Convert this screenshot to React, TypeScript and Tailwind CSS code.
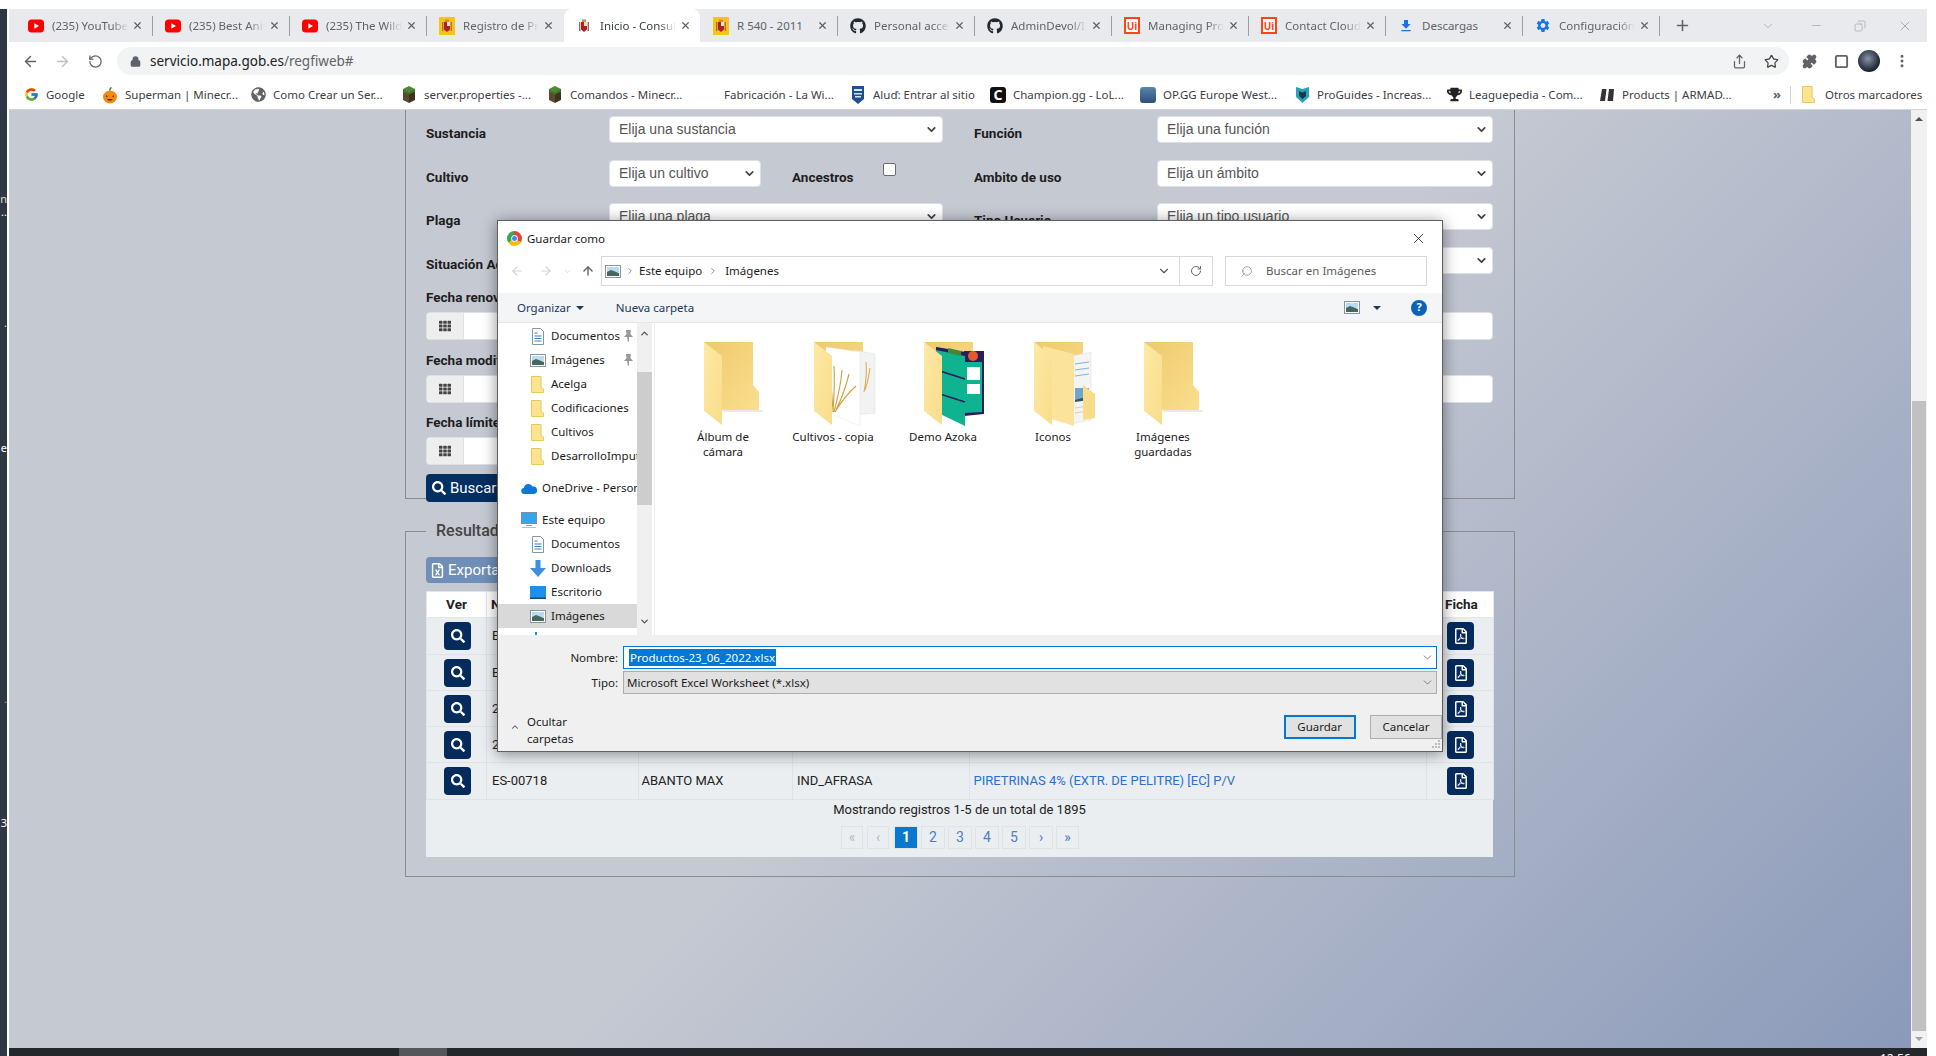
import React from "react";
import { ArrowLeft, ArrowRight, ArrowUp, RotateCw, Lock, Share, Star, Puzzle, EllipsisVertical, X, Plus, Minus, ChevronDown, ChevronUp, ChevronRight, Search, Square, Copy } from "lucide-react";
import { FaSearch, FaRegFilePdf, FaRegFileExcel, FaTh, FaGithub, FaTrophy, FaGlobeAmericas } from "react-icons/fa";
import { FcGoogle } from "react-icons/fc";
import { MdSettings, MdFileDownload } from "react-icons/md";

const ui = "font-['Noto_Sans','Open_Sans',sans-serif]";
const web = "font-['Roboto',sans-serif]";

function YT() {
  return <svg width="16" height="16" viewBox="0 0 16 16"><rect y="1.5" width="16" height="13" rx="3.5" fill="#f00" /><path d="M6.3 5.2v5.6L11 8z" fill="#fff" /></svg>;
}
function Arms({ bg }: { bg?: boolean }) {
  return (
    <svg width="16" height="18" viewBox="0 0 16 18">
      {bg && <rect width="16" height="18" fill="#f6c21c" />}
      <path d="M5 5h6v7.5L8 15l-3-2.5z" fill="#b5201f" />
      <path d="M3 5h1.4v9H3zM11.6 5H13v9h-1.4z" fill={bg ? "#a9772c" : "#8a6d6d"} />
      <path d="M6 2.5h4V5H6z" fill="#c8922e" />
      <path d="M8 5h3v4H8z" fill="#e6e0d0" />
    </svg>
  );
}
function UiP() {
  return <span className={`flex h-[17px] w-[16px] items-center justify-center border-2 border-[#fa4616] bg-white text-[10px] font-bold leading-none text-[#fa4616] ${ui}`}>Ui</span>;
}

const tabs = [
  { t: "(235) YouTube", i: <YT /> },
  { t: "(235) Best Anime", i: <YT /> },
  { t: "(235) The Wild", i: <YT /> },
  { t: "Registro de Productos", i: <Arms bg /> },
  { t: "Inicio - Consulta", i: <Arms />, a: true },
  { t: "R 540 - 2011", i: <Arms bg />, nf: true },
  { t: "Personal access", i: <FaGithub size={16} color="#24292f" /> },
  { t: "AdminDevol/I", i: <FaGithub size={16} color="#24292f" /> },
  { t: "Managing Projects", i: <UiP /> },
  { t: "Contact Cloud", i: <UiP /> },
  { t: "Descargas", i: <MdFileDownload size={18} color="#1a73e8" />, nf: true },
  { t: "Configuración", i: <MdSettings size={17} color="#1a73e8" /> },
];

function Tab({ t, i, a, nf }: { t: string; i: React.ReactNode; a?: boolean; nf?: boolean }) {
  return (
    <div className={`flex h-[33px] w-[136px] shrink-0 items-center pl-[12px] ${a ? "rounded-t-lg bg-white" : ""}`}>
      <span className="flex w-[16px] shrink-0 justify-center">{i}</span>
      <span className={`ml-[8px] w-[76px] overflow-hidden whitespace-nowrap text-[11.5px] ${a ? "text-[#3c4043]" : "text-[#5f6368]"} ${nf ? "" : "[mask-image:linear-gradient(90deg,#000_78%,transparent_100%)]"}`}>{t}</span>
      <X size={11} strokeWidth={2.6} className="ml-[4px] shrink-0 text-[#5f6368]" />
    </div>
  );
}

function Block() {
  return <svg width="14" height="17" viewBox="0 0 14 17"><path d="M1 3l6-3 6 3-6 3z" fill="#4e8a32" /><path d="M1 3l6 3v11l-6-3z" fill="#5b4a2d" /><path d="M13 3L7 6v11l6-3z" fill="#3f3320" /><path d="M1 3l6 3 6-3v2.5l-6 3-6-3z" fill="#3c7a28" /></svg>;
}

const bookmarks = [
  { t: "Google", w: "w-[79px]", i: <FcGoogle size={15} /> },
  { t: "Superman | Minecr...", w: "w-[148px]", i: <svg width="16" height="18" viewBox="0 0 16 18"><ellipse cx="8" cy="11" rx="7" ry="6.5" fill="#f08a12" /><path d="M7 4.5c0-2 1-3 2-3.5l1 1c-1 .5-1.4 1.200-1.400 2.500z" fill="#4c7a2a" /><path d="M4 9l2 1.500-2 .5zM12 9l-2 1.500 2 .5zM5 13h6l-1.500 1.500h-3z" fill="#5a2b00" /></svg> },
  { t: "Como Crear un Ser...", w: "w-[151px]", i: <FaGlobeAmericas size={15} color="#5f6368" /> },
  { t: "server.properties -...", w: "w-[146px]", i: <Block /> },
  { t: "Comandos - Minecr...", w: "w-[154px]", i: <Block /> },
  { t: "Fabricación - La Wi...", w: "w-[149px]", i: <span className="block h-[16px] w-[16px]" /> },
  { t: "Aluď: Entrar al sitio", w: "w-[140px]", i: <svg width="14" height="18" viewBox="0 0 14 18"><path d="M1 0h12v13l-6 5-6-5z" fill="#1d4f91" /><path d="M3 3h8v2H3zM3 7h8v1.500H3zM4 10h6v1.500H4z" fill="#d9e6f5" /></svg> },
  { t: "Champion.gg - LoL...", w: "w-[150px]", i: <span className="flex h-[16px] w-[16px] items-center justify-center rounded-[3px] bg-[#111] text-[14px] font-bold leading-none text-white">C</span> },
  { t: "OP.GG Europe West...", w: "w-[154px]", i: <span className="block h-[16px] w-[16px] rounded-[3px] bg-[linear-gradient(180deg,#5c84ad,#2c4f79)]" /> },
  { t: "ProGuides - Increas...", w: "w-[152px]", i: <svg width="15" height="17" viewBox="0 0 15 17"><path d="M1 1l6.500 2L14 1v10l-6.500 6L1 11z" fill="#2aa3b8" /><path d="M4 5l3.500 1.500L11 5v5l-3.500 3L4 10z" fill="#14394a" /></svg> },
  { t: "Leaguepedia - Com...", w: "w-[153px]", i: <FaTrophy size={15} color="#222" /> },
  { t: "Products | ARMAD...", w: "w-[174px]", i: <svg width="16" height="16" viewBox="0 0 16 16"><path d="M3 2h4.500L6 14H1zM10 2h5l-1 12H8.500z" fill="#333" /></svg> },
];

function Bookmark({ t, w, i }: { t: string; w: string; i: React.ReactNode }) {
  return (
    <div className={`flex items-center ${w}`}>
      <span className="flex w-[16px] shrink-0 justify-center">{i}</span>
      <span className="ml-[7px] whitespace-nowrap text-[11.5px] text-[#3c4043]">{t}</span>
    </div>
  );
}

function Sel({ t, w }: { t: string; w: string }) {
  return (
    <div className={`flex h-[27px] shrink-0 items-center justify-between rounded-[4px] border border-[#dde1e7] bg-white pl-[9px] pr-[4px] font-['Liberation_Sans',sans-serif] text-[14px] text-[#555] ${w}`}>
      <span>{t}</span>
      <ChevronDown size={13} strokeWidth={3.2} className="text-[#444]" />
    </div>
  );
}

function Lbl({ t, w }: { t: string; w: string }) {
  return <div className={`mt-[4px] shrink-0 whitespace-nowrap text-[13.5px] font-bold leading-[27px] text-[#1d1d1d] ${w}`}>{t}</div>;
}

function DateInput({ w }: { w: string }) {
  return (
    <div className={`flex h-[28px] overflow-hidden rounded-[4px] border border-[#dde1e7] bg-white ${w}`}>
      <div className="flex w-[37px] items-center justify-center border-r border-[#dde1e7] bg-[#eeeeee]">
        <FaTh size={12} color="#444" />
      </div>
    </div>
  );
}

function DateRow({ t, right }: { t: string; right?: boolean }) {
  return (
    <div className="mt-[9.500px] flex">
      <div className="w-[517px]">
        <div className="h-[20px] whitespace-nowrap text-[13.5px] font-bold leading-[20px] text-[#1d1d1d]">{t}</div>
        <DateInput w="mt-[5px] w-[517px]" />
      </div>
      {right && (
        <div className="ml-[31px] w-[519px] pt-[25px]">
          <div className="h-[28px] rounded-[4px] border border-[#dde1e7] bg-white" />
        </div>
      )}
    </div>
  );
}

function IconBtn({ children }: { children: React.ReactNode }) {
  return <span className="flex h-[28px] w-[27px] items-center justify-center rounded-[4px] bg-[#042b5c] text-white">{children}</span>;
}

const rows = [
  { h: "h-[37px]", a: "E" },
  { h: "h-[36px]", a: "E" },
  { h: "h-[36px]", a: "2" },
  { h: "h-[36px]", a: "2" },
  { h: "h-[37px]", a: "ES-00718", b: "ABANTO MAX", c: "IND_AFRASA", d: "PIRETRINAS 4% (EXTR. DE PELITRE) [EC] P/V" },
];

function Pg({ t, cls }: { t: string; cls: string }) {
  return <span className={`flex h-[23px] items-center justify-center border border-[#dfe3e8] text-[14px] ${cls}`}>{t}</span>;
}

function NavFolder() {
  return <svg width="13" height="17" viewBox="0 0 13 17"><path d="M.5.500h9.500v11l2.500 1.500v3.500H.5z" fill="#fde590" stroke="#e8c660" /></svg>;
}
function NavDoc() {
  return <svg width="12" height="17" viewBox="0 0 12 17"><path d="M.5.500h8l3 3v13H.5z" fill="#fff" stroke="#8a94a0" /><path d="M2.500 5h3M2.500 8h7M2.500 10.500h7M2.500 13h7" stroke="#3f7fc4" /></svg>;
}
function NavPic() {
  return <svg width="16" height="13" viewBox="0 0 16 13"><rect x=".5" y=".5" width="15" height="12" fill="#fff" stroke="#8a94a0" /><rect x="2" y="2" width="12" height="5" fill="#b9dcf2" /><path d="M2 7l4-2 8 3v3H2z" fill="#47685f" /></svg>;
}
function NavCloud() {
  return <svg width="16" height="11" viewBox="0 0 16 11"><path d="M3.500 11a3 3 0 0 1-.5-6 4.500 4.500 0 0 1 8.500-1.500A3.800 3.800 0 0 1 13 11z" fill="#0f78d4" /></svg>;
}
function NavPC() {
  return <svg width="16" height="16" viewBox="0 0 16 16"><rect x=".5" y=".5" width="15" height="11" fill="#35a6ec" stroke="#7f8e9c" /><path d="M5 13h6v1H5z" fill="#8d99a5" /><path d="M1 15h14v1H1z" fill="#b7c0c9" /></svg>;
}
function NavDown() {
  return <svg width="16" height="17" viewBox="0 0 16 17"><path d="M5.500 0h5v8H16l-8 9-8-9h5.500z" fill="#3f8fe0" /></svg>;
}
function NavDesk() {
  return <svg width="16" height="13" viewBox="0 0 16 13"><rect width="16" height="13" fill="#1f8fe8" /><path d="M0 11.500h16V13H0z" fill="#0b4c8a" /></svg>;
}

function NavRow({ t, icon, l1, pin, sel, gap }: { t: string; icon: React.ReactNode; l1?: boolean; pin?: boolean; sel?: boolean; gap?: boolean }) {
  return (
    <div className={`relative flex h-[24px] shrink-0 items-center whitespace-nowrap text-[11.5px] text-[#1b1b1b] ${sel ? "bg-[#d9d9d9]" : ""} ${gap ? "mt-[8px]" : ""}`}>
      <span className={`flex shrink-0 justify-center ${l1 ? "ml-[23px] w-[16px]" : "ml-[31px] w-[17px]"}`}>{icon}</span>
      <span className={l1 ? "ml-[5px]" : "ml-[5px]"}>{t}</span>
      {pin && <span className="absolute right-[3px] top-[5px] bg-white pl-[2px] text-[#9a9a9a]"><svg width="11" height="13" viewBox="0 0 11 13"><path d="M3 1h5l-.6 4L10 8H6v4l-1 1-1-5H1l2.500-3z" fill="currentColor" /></svg></span>}
    </div>
  );
}

function Defs() {
  return (
    <defs>
      <linearGradient id="fb" x1="0" y1="0" x2="1" y2="1"><stop offset="0" stopColor="#efc96c" /><stop offset="1" stopColor="#f9df8f" /></linearGradient>
      <linearGradient id="ff" x1="0" y1="0" x2="1" y2="1"><stop offset="0" stopColor="#fdeaa5" /><stop offset="1" stopColor="#f8dc8a" /></linearGradient>
    </defs>
  );
}
const BACK = "0,0 49,0 49,43 55,50 55,68 18,68 0,68";
const FLAP = "0,0 18,14 18,83 0,69";

function Folder({ v }: { v: string }) {
  return (
    <svg width="62" height="84" viewBox="0 0 62 84" className="mx-auto block">
      <Defs />
      <polygon points={BACK} fill="url(#fb)" />
      {v === "plain" && <polygon points="18,68 60,68 58,70 20,70" fill="#e9e9e9" />}
      {v === "crop" && (
        <g>
          <polygon points="40,8 61,12 61,71 40,73" fill="#f2f2f2" stroke="#dcdcdc" strokeWidth=".5" />
          <polygon points="12,5 46,10 46,84 12,70" fill="#fff" stroke="#e0e0e0" strokeWidth=".5" />
          <g stroke="#c9a23f" strokeWidth="1.100" fill="none">
            <path d="M19 70C20 55 21 40 20 24M20 70C24 55 27 42 28 28M21 70C27 60 33 52 42 44M19 68C18 55 17 45 17 35M22 68C28 56 31 48 35 32" />
            <path d="M50 50C52 40 53 30 52 20M51 48C54 40 55 32 56 26" stroke="#d8b158" />
          </g>
        </g>
      )}
      {v === "demo" && (
        <g>
          <polygon points="40,9 60,9 60,72 40,74" fill="#2b1d5c" />
          <polygon points="41,20 58,20 58,70 41,71" fill="#10b38f" />
          <rect x="43" y="25" width="13" height="13" fill="#fff" />
          <rect x="43" y="42" width="13" height="10" fill="#fff" />
          <circle cx="49" cy="14" r="5" fill="#e25b2a" />
          <polygon points="12,5 41,10 41,84 12,70" fill="#10b38f" />
          <polygon points="12,5 41,10 41,14 12,8" fill="#2b1d5c" />
          <path d="M16 29L41 37M16 52L41 60" stroke="#2b1d5c" strokeWidth="1.800" />
          <polygon points="24,6 37,9 37,14 24,11" fill="#3f8a3a" />
        </g>
      )}
      {v === "icons" && (
        <g>
          <polygon points="38,14 57,10 57,78 38,82" fill="#f4f4f4" stroke="#dedede" strokeWidth=".5" />
          <path d="M41 22L55 20M41 28L55 26M41 34L55 32" stroke="#7fb4dc" strokeWidth="1" />
          <rect x="41" y="46" width="14" height="12" fill="#6fa6c8" />
          <polygon points="41,58 55,54 55,58 41,60" fill="#34586a" />
          <path d="M41 66L55 64M41 71L55 69" stroke="#cfcfcf" strokeWidth="1" />
          <polygon points="49,43 61,52 61,76 49,78" fill="#f8dc8a" />
          <polygon points="9,4 40,12 40,84 14,76" fill="#fbe49a" />
        </g>
      )}
      <polygon points={FLAP} fill="url(#ff)" />
    </svg>
  );
}

function Item({ v, t }: { v: string; t: React.ReactNode }) {
  return (
    <div className="w-[110px] shrink-0">
      <div className="flex h-[84px] justify-start pl-[24px]"><Folder v={v} /></div>
      <div className="mt-[3px] text-center text-[11.5px] leading-[15px] text-[#1b1b1b]">{t}</div>
    </div>
  );
}

function Dialog() {
  return (
    <div className={`absolute left-[497px] top-[220px] flex h-[532px] w-[946px] flex-col border border-[#5e6063] bg-white shadow-[0_2px_14px_rgba(0,0,0,0.45)] ${ui}`}>
      <div className="flex h-[35px] shrink-0 items-center pl-[9px] pr-[9px]">
        <span className="relative block h-[15px] w-[15px] rounded-full bg-[conic-gradient(#ea4335_0_33%,#fbbc05_33%_66%,#34a853_66%_100%)]">
          <span className="absolute left-[4px] top-[4px] h-[7px] w-[7px] rounded-full border border-white bg-[#4285f4]" />
        </span>
        <span className="ml-[5px] text-[11.5px] text-[#1b1b1b]">Guardar como</span>
        <X size={17} strokeWidth={1.1} className="ml-auto mr-[6px] text-[#111]" />
      </div>
      <div className="flex h-[30px] shrink-0 items-center">
        <ArrowLeft size={14} className="ml-[12px] text-[#cfd3d8]" />
        <ArrowRight size={14} className="ml-[15px] text-[#cfd3d8]" />
        <ChevronDown size={9} className="ml-[10px] text-[#cfd3d8]" />
        <ArrowUp size={14} strokeWidth={2.4} className="ml-[9px] text-[#5f6368]" />
        <div className="ml-[6px] flex h-[30px] w-[612px] items-center border border-[#d9d9d9] text-[11.5px] text-[#1b1b1b]">
          <span className="ml-[3px]"><NavPic /></span>
          <ChevronRight size={10} className="ml-[4px] text-[#777]" />
          <span className="ml-[4px]">Este equipo</span>
          <ChevronRight size={10} className="ml-[6px] text-[#777]" />
          <span className="ml-[7px]">Imágenes</span>
          <ChevronDown size={14} className="ml-auto mr-[8px] text-[#555]" />
          <span className="flex h-full w-[33px] items-center justify-center border-l border-[#d9d9d9]"><RotateCw size={12} className="text-[#666]" /></span>
        </div>
        <div className="ml-[12px] flex h-[30px] w-[202px] items-center border border-[#d9d9d9] text-[11.5px] text-[#5b5b5b]">
          <Search size={13} strokeWidth={1.2} className="ml-[14px] -scale-x-100 text-[#777]" />
          <span className="ml-[13px]">Buscar en Imágenes</span>
        </div>
      </div>
      <div className="h-[7px] shrink-0" />
      <div className="flex h-[30px] shrink-0 items-center border-b border-[#e6e6e6] bg-[#f3f5f7] text-[11.5px] text-[#21395c]">
        <span className="ml-[19px]">Organizar</span>
        <span className="ml-[5px] h-0 w-0 border-x-[4px] border-t-[4px] border-x-transparent border-t-[#21395c]" />
        <span className="ml-[32px]">Nueva carpeta</span>
        <span className="ml-auto"><NavPic /></span>
        <span className="ml-[13px] h-0 w-0 border-x-[4px] border-t-[4px] border-x-transparent border-t-[#21395c]" />
        <span className="ml-[30px] mr-[15px] flex h-[16px] w-[16px] items-center justify-center rounded-full bg-[#0a63b8] text-[11px] font-bold text-white">?</span>
      </div>
      <div className="flex h-[312px] shrink-0 overflow-hidden">
        <div className="flex w-[139px] shrink-0 flex-col overflow-hidden pt-px">
          <NavRow t="Documentos" icon={<NavDoc />} pin />
          <NavRow t="Imágenes" icon={<NavPic />} pin />
          <NavRow t="Acelga" icon={<NavFolder />} />
          <NavRow t="Codificaciones" icon={<NavFolder />} />
          <NavRow t="Cultivos" icon={<NavFolder />} />
          <NavRow t="DesarrolloImput" icon={<NavFolder />} />
          <NavRow t="OneDrive - Personal" icon={<NavCloud />} l1 gap />
          <NavRow t="Este equipo" icon={<NavPC />} l1 gap />
          <NavRow t="Documentos" icon={<NavDoc />} />
          <NavRow t="Downloads" icon={<NavDown />} />
          <NavRow t="Escritorio" icon={<NavDesk />} />
          <NavRow t="Imágenes" icon={<NavPic />} sel />
          <div className="ml-[37px] mt-[4px] h-[4px] w-[2px] shrink-0 bg-[#1a8fe3]" />
        </div>
        <div className="flex w-[15px] shrink-0 flex-col items-center bg-[#f0f0f0]">
          <ChevronUp size={11} strokeWidth={3} className="mt-[5px] shrink-0 text-[#555]" />
          <div className="mt-[33px] h-[133px] w-full shrink-0 bg-[#cdcdcd]" />
          <ChevronDown size={11} strokeWidth={3} className="mt-[111px] shrink-0 text-[#555]" />
        </div>
        <div className="w-[3px] shrink-0 border-r border-[#eeeeee]" />
        <div className="flex flex-1 pl-[13px] pt-[19px]">
          <Item v="plain" t={<>Álbum de<br />cámara</>} />
          <Item v="crop" t="Cultivos - copia" />
          <Item v="demo" t="Demo Azoka" />
          <Item v="icons" t="Iconos" />
          <Item v="plain" t={<>Imágenes<br />guardadas</>} />
        </div>
      </div>
      <div className="relative flex-1 bg-[#f0f0f0] text-[11.5px] text-[#1b1b1b]">
        <div className="flex h-[23px] items-center pt-0 mt-[11px]">
          <span className="w-[120px] text-right">Nombre:</span>
          <div className="ml-[5px] flex h-[23px] w-[814px] items-center border border-[#0078d7] bg-white pl-[5px]">
            <span className="bg-[#0078d7] px-[1px] leading-[17px] text-white">Productos-23_06_2022.xlsx</span>
            <ChevronDown size={13} strokeWidth={1.2} className="ml-auto mr-[2px] text-[#444]" />
          </div>
        </div>
        <div className="mt-[2px] flex h-[23px] items-center">
          <span className="w-[120px] text-right">Tipo:</span>
          <div className="ml-[5px] flex h-[23px] w-[814px] items-center border border-[#adadad] bg-[#e1e1e1] pl-[3px]">
            <span>Microsoft Excel Worksheet (*.xlsx)</span>
            <ChevronDown size={13} strokeWidth={1.2} className="ml-auto mr-[2px] text-[#444]" />
          </div>
        </div>
        <div className="mt-[21px] flex h-[24px] items-center">
          <ChevronUp size={12} strokeWidth={2.4} className="ml-[12px] text-[#555]" />
          <span className="ml-[7px] mt-[6px]">Ocultar carpetas</span>
          <span className="ml-[682px] flex h-[24px] w-[86px] items-center justify-center border-2 border-[#0078d7] bg-[#e1e1e1]">Guardar</span>
          <span className="ml-[14px] flex h-[24px] w-[86px] items-center justify-center border border-[#adadad] bg-[#e1e1e1]">Cancelar</span>
        </div>
        <svg width="10" height="9" viewBox="0 0 10 9" className="absolute bottom-[2px] right-[1px]"><path d="M7 0h2v2H7zM4 3h2v2H4zM7 3h2v2H7zM1 6h2v2H1zM4 6h2v2H4zM7 6h2v2H7z" fill="#bdbdbd" /></svg>
      </div>
    </div>
  );
}

export default function App() {
  return (
    <div className={`relative flex h-[1056px] w-[1936px] overflow-hidden bg-white ${ui}`}>
      <div className="relative mt-[9px] w-[7px] shrink-0 overflow-hidden bg-[#2f3744] text-[11px] leading-[12px]">
        <span className="absolute right-0 top-[184px] text-[#d8e0c8]">n</span>
        <span className="absolute right-0 top-[197px] text-white">..</span>
        <span className="absolute right-0 top-[308px] text-[#c8e0d8]">.</span>
        <span className="absolute right-0 top-[433px] text-white">e</span>
        <span className="absolute right-0 top-[684px] text-[#f09040]">.</span>
        <span className="absolute right-0 top-[808px] text-white">3</span>
      </div>
      <div className="w-[2px] shrink-0" />
      <div className="flex w-[1918px] shrink-0 flex-col">
        <div className="h-[9px] shrink-0" />
        {/* tab strip */}
        <div className="flex h-[33px] shrink-0 items-center bg-[#e8eaed] pl-[7px]">
          {tabs.map((t, n) => (
            <React.Fragment key={n}>
              <Tab {...t} />
              <span className={`h-[20px] w-px shrink-0 ${n === 3 || n === 4 ? "bg-transparent" : "bg-[#9aa0a6]"}`} />
            </React.Fragment>
          ))}
          <Plus size={17} strokeWidth={2.2} className="ml-[14px] text-[#5f6368]" />
          <div className="ml-auto flex items-center pr-[14px] text-[#8a8d91]">
            <ChevronDown size={14} strokeWidth={1} />
            <Minus size={13} strokeWidth={1} className="ml-[35px]" />
            <Copy size={12} strokeWidth={1} className="ml-[31px] -scale-x-100" />
            <X size={16} strokeWidth={1} className="ml-[31px]" />
          </div>
        </div>
        {/* toolbar */}
        <div className="flex h-[38px] shrink-0 items-center text-[#5f6368]">
          <ArrowLeft size={17} strokeWidth={2} className="ml-[13px]" />
          <ArrowRight size={17} strokeWidth={2} className="ml-[15px] text-[#bdc1c6]" />
          <RotateCw size={15} strokeWidth={2} className="ml-[17px] -scale-x-100" />
          <div className="ml-[14px] flex h-[28px] w-[1672px] items-center rounded-full bg-[#f1f3f4]">
            <Lock size={11} strokeWidth={3} fill="#5f6368" className="ml-[13px]" />
            <span className="ml-[9px] text-[13.5px] text-[#202124]">servicio.mapa.gob.es<span className="text-[#5f6368]">/regfiweb#</span></span>
            <Share size={15} className="ml-auto" />
            <Star size={15} strokeWidth={2} className="ml-[17px] mr-[10px] text-[#444]" />
          </div>
          <Puzzle size={15} fill="#5f6368" className="ml-[13px]" />
          <Square size={15} strokeWidth={3} className="ml-[17px]" />
          <span className="ml-[9px] block h-[22px] w-[22px] rounded-full bg-[radial-gradient(circle_at_45%_40%,#8893a5,#1a2030_70%)]" />
          <EllipsisVertical size={16} strokeWidth={2.5} className="ml-[14px]" />
        </div>
        {/* bookmarks */}
        <div className="flex h-[29px] shrink-0 items-center border-b-0 pl-[14px]">
          {bookmarks.map((b) => <Bookmark key={b.t} {...b} />)}
          <span className="text-[13px] font-bold text-[#5f6368]">»</span>
          <span className="ml-[9px] h-[18px] w-px bg-[#d0d3d7]" />
          <span className="ml-[11px]"><NavFolder /></span>
          <span className="ml-[10px] whitespace-nowrap text-[11.5px] text-[#3c4043]">Otros marcadores</span>
        </div>
        {/* page */}
        <div className="flex min-h-0 flex-1 border-t border-[#d3d5d8]">
          <div className={`flex-1 overflow-hidden bg-[linear-gradient(135deg,#c5c9d2_52%,#8b9aba_100%)] pl-[396px] ${web}`}>
            <div className="h-[389px] w-[1110px] border-x border-b border-[#8c8c8c] pl-[20px] pt-[6px]">
              <div className="flex flex-col gap-[12.670px]">
                <div className="flex"><Lbl t="Sustancia" w="w-[183px]" /><Sel t="Elija una sustancia" w="w-[334px]" /><div className="w-[31px]" /><Lbl t="Función" w="w-[183px]" /><Sel t="Elija una función" w="w-[336px]" /></div>
                <div className="flex">
                  <Lbl t="Cultivo" w="w-[183px]" /><Sel t="Elija un cultivo" w="w-[152px]" />
                  <Lbl t="Ancestros" w="ml-[31px] w-[91px]" />
                  <span className="mt-[3px] h-[13px] w-[13px] shrink-0 rounded-[2px] border border-[#6b6b6b] bg-white" />
                  <div className="w-[78px]" />
                  <Lbl t="Ambito de uso" w="w-[183px]" /><Sel t="Elija un ámbito" w="w-[336px]" />
                </div>
                <div className="flex"><Lbl t="Plaga" w="w-[183px]" /><Sel t="Elija una plaga" w="w-[334px]" /><div className="w-[31px]" /><Lbl t="Tipo Usuario" w="w-[183px]" /><Sel t="Elija un tipo usuario" w="w-[336px]" /></div>
                <div className="flex"><Lbl t="Situación Administrativa" w="w-[183px]" /><Sel t="" w="w-[334px]" /><div className="w-[31px]" /><div className="w-[183px]" /><Sel t="" w="w-[336px]" /></div>
              </div>
              <DateRow t="Fecha renovación" right />
              <DateRow t="Fecha modificación" right />
              <DateRow t="Fecha límite" />
              <div className="mt-[9px] flex h-[28px] w-[100px] items-center rounded-[4px] bg-[#042f63] pl-[6px] text-[15px] text-white">
                <FaSearch size={14} />
                <span className="ml-[4px]">Buscar</span>
              </div>
            </div>
            <fieldset className="mt-[20px] h-[358px] w-[1110px] border border-[#8c8c8c] px-[20px]">
              <legend className="h-[24px] px-[10px] text-[16px] font-medium leading-[24px] text-[#444]">Resultados</legend>
              <div className="mt-[14px] flex h-[26px] w-[100px] items-center rounded-[4px] bg-[#6f8fb8] pl-[4px] text-[15px] text-white">
                <FaRegFileExcel size={15} />
                <span className="ml-[3px]">Exportar</span>
              </div>
              <table className="mt-[8px] w-[1067px] table-fixed border-collapse text-[13px] text-[#222]">
                <colgroup>
                  <col className="w-[60px]" /><col className="w-[151.500px]" /><col className="w-[154.500px]" /><col className="w-[176.500px]" /><col className="w-[457.500px]" /><col className="w-[67px]" />
                </colgroup>
                <thead>
                  <tr className="h-[26px] bg-white text-[13.5px] font-bold">
                    <th className="border border-[#e2e5e9] text-center">Ver</th>
                    <th className="border border-[#e2e5e9] pl-[4px] text-left">N</th>
                    <th className="border border-[#e2e5e9]" />
                    <th className="border border-[#e2e5e9]" />
                    <th className="border border-[#e2e5e9]" />
                    <th className="border border-[#e2e5e9] pl-[18px] text-left">Ficha</th>
                  </tr>
                </thead>
                <tbody>
                  {rows.map((r, n) => (
                    <tr key={n} className={`${r.h} bg-[#ebeef1]`}>
                      <td className="border border-[#dfe3e7] pl-[17px]"><IconBtn><FaSearch size={14} /></IconBtn></td>
                      <td className="border border-[#dfe3e7] pl-[5px]">{r.a}</td>
                      <td className="border border-[#dfe3e7] pl-[3px]">{r.b}</td>
                      <td className="border border-[#dfe3e7] pl-[4px]">{r.c}</td>
                      <td className="border border-[#dfe3e7] pl-[4px] text-[#2a6fcf]">{r.d}</td>
                      <td className="border border-[#dfe3e7] pl-[20px]"><IconBtn><FaRegFilePdf size={16} /></IconBtn></td>
                    </tr>
                  ))}
                </tbody>
              </table>
              <div className="h-[57px] w-[1067px] bg-[#ebeef1]">
                <div className="h-[20px] pr-[0px] text-center text-[13px] leading-[20px] text-[#222]">Mostrando registros 1-5 de un total de 1895</div>
                <div className="ml-[415px] mt-[6px] flex gap-[3px] text-[#4a80c4]">
                  <Pg t="«" cls="w-[22px] text-[#a9bad0]" />
                  <Pg t="‹" cls="ml-[1px] w-[22px] text-[#a9bad0]" />
                  <Pg t="1" cls="ml-[2px] w-[24px] border-[#0b78d0] bg-[#0b78d0] font-bold text-white" />
                  <Pg t="2" cls="w-[24px]" />
                  <Pg t="3" cls="w-[24px]" />
                  <Pg t="4" cls="w-[24px]" />
                  <Pg t="5" cls="w-[24px]" />
                  <Pg t="›" cls="w-[24px]" />
                  <Pg t="»" cls="w-[23px]" />
                </div>
              </div>
            </fieldset>
          </div>
          <div className="flex w-[16px] shrink-0 flex-col items-center bg-[#f1f1f1]">
            <span className="mt-[7px] h-0 w-0 border-x-[4px] border-b-[4px] border-x-transparent border-b-[#505050]" />
            <div className="mt-[280px] h-[630px] w-[14px] bg-[#c1c1c1]" />
            <span className="mt-[6px] h-0 w-0 border-x-[4px] border-t-[4px] border-x-transparent border-t-[#a3a3a3]" />
          </div>
        </div>
        {/* bottom bar */}
        <div className="relative flex h-[8px] shrink-0 overflow-hidden bg-[#24272c]">
          <div className="ml-[390px] h-full w-[48px] bg-[#55565a]" />
          <span className="absolute left-[1871px] top-[4px] text-[12px] leading-[14px] text-white">12:56</span>
        </div>
      </div>
      <Dialog />
    </div>
  );
}
